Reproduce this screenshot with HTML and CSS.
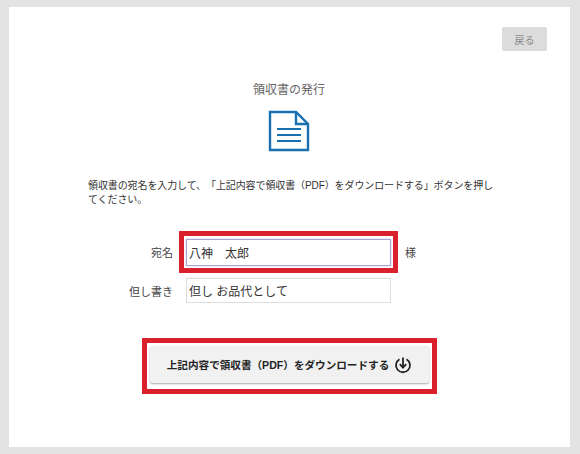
FILE: index.html
```html
<!DOCTYPE html>
<html lang="ja">
<head>
    <meta charset="UTF-8">
    <meta name="viewport" content="width=device-width, initial-scale=1.0">
    <title>領収書の発行</title>
    <link rel="stylesheet" href="styles.css">
</head>
<body>
    <div class="card">
        <div class="top">
            <button class="back">戻る</button>
        </div>
        <h1 class="title">領収書の発行</h1>
        <div class="icon">
            <svg width="42" height="42" viewBox="0 0 42 42" fill="none" stroke="#1a6fae" stroke-width="2.4">
                <path d="M2 2H28L40 14V40H2Z"/>
                <path d="M28 2V14H40"/>
                <path d="M9 19H33M9 25H33M9 31H33" stroke-width="2"/>
            </svg>
        </div>
        <p class="note">領収書の宛名を入力して、「上記内容で領収書（PDF）をダウンロードする」ボタンを押してください。</p>
        <div class="row row-name">
            <label class="label">宛名</label>
            <div class="mark">
                <input class="field field-focus" type="text" value="八神　太郎">
            </div>
            <span class="suffix">様</span>
        </div>
        <div class="row row-memo">
            <label class="label">但し書き</label>
            <input class="field" type="text" value="但し お品代として">
        </div>
        <div class="actions">
            <div class="mark mark-button">
                <button class="download">
                    <span>上記内容で領収書（PDF）をダウンロードする</span>
                    <svg width="18" height="18" viewBox="0 0 18 18" fill="none" stroke="#222" stroke-width="1.8">
                        <path d="M5.5 3.2A7 7 0 1 0 12.5 3.2"/>
                        <path d="M9 1.5V11"/>
                        <path d="M5.8 8.2L9 11.6L12.2 8.2"/>
                    </svg>
                </button>
            </div>
        </div>
    </div>
</body>
</html>
```

FILE: styles.css
```css
* {
    box-sizing: border-box;
}
html, body {
    height: 100%;
}
body {
    margin: 0;
    padding: 7px 10px 7px 9px;
    background-color: #e3e3e3;
    font-family: "Liberation Sans", "Noto Sans CJK JP", sans-serif;
    color: #333;
    text-spacing-trim: space-all;
}
.card {
    height: 440px;
    padding: 20px 23px 0 79px;
    background-color: #fff;
}
.top {
    display: flex;
    justify-content: flex-end;
}
.back {
    width: 45px;
    height: 24px;
    padding: 0;
    border: none;
    border-radius: 2px;
    background-color: #dcdcdc;
    color: #8a8a8a;
    font-family: inherit;
    font-size: 10px;
}
.title {
    width: 402px;
    margin: 31px 0 0;
    color: #666;
    font-size: 12px;
    font-weight: normal;
    line-height: 16px;
    text-align: center;
}
.icon {
    display: flex;
    justify-content: center;
    width: 402px;
    margin-top: 12px;
    height: 42px;
}
.note {
    width: 412px;
    margin: 27px 0 0;
    font-size: 10px;
    line-height: 14px;
    letter-spacing: -0.1px;
    color: #333;
}
.row {
    display: flex;
    align-items: center;
    font-size: 11px;
}
.row-name {
    margin-top: 24px;
}
.row-memo {
    margin-top: 5px;
}
.label {
    width: 85px;
    color: #444;
    font-size: 11px;
    text-align: right;
}
.mark {
    border: 5px solid #d9202c;
    padding: 3px 2px 2px 2px;
    background-color: #fff;
    margin: 0 0 0 6px;
}
.row-memo .field {
    margin-left: 13px;
}
.field {
    display: block;
    width: 205px;
    height: 25px;
    padding: 0 2px;
    border: 1px solid #ddd;
    outline: none;
    background-color: #fff;
    color: #333;
    font-family: inherit;
    font-size: 12px;
}
.field-focus {
    height: 27px;
    border: 1px solid #a9a3d6;
    box-shadow: 0 0 2px #c9c5e6;
}
.suffix {
    margin-left: 7px;
    color: #444;
    font-size: 11px;
}
.actions {
    display: flex;
    margin: 35px 0 0 54px;
}
.mark-button {
    margin: 0;
    padding: 3px 3px 6px;
    border-width: 5px;
}
.download {
    display: flex;
    align-items: center;
    justify-content: center;
    gap: 5px;
    width: 279px;
    height: 37px;
    padding: 0;
    border: none;
    border-radius: 2px;
    background-color: #f1f1f1;
    box-shadow: 0 1px 2px rgba(0, 0, 0, 0.35);
    color: #222;
    font-family: inherit;
    font-size: 10.6px;
    font-weight: bold;
}
```
